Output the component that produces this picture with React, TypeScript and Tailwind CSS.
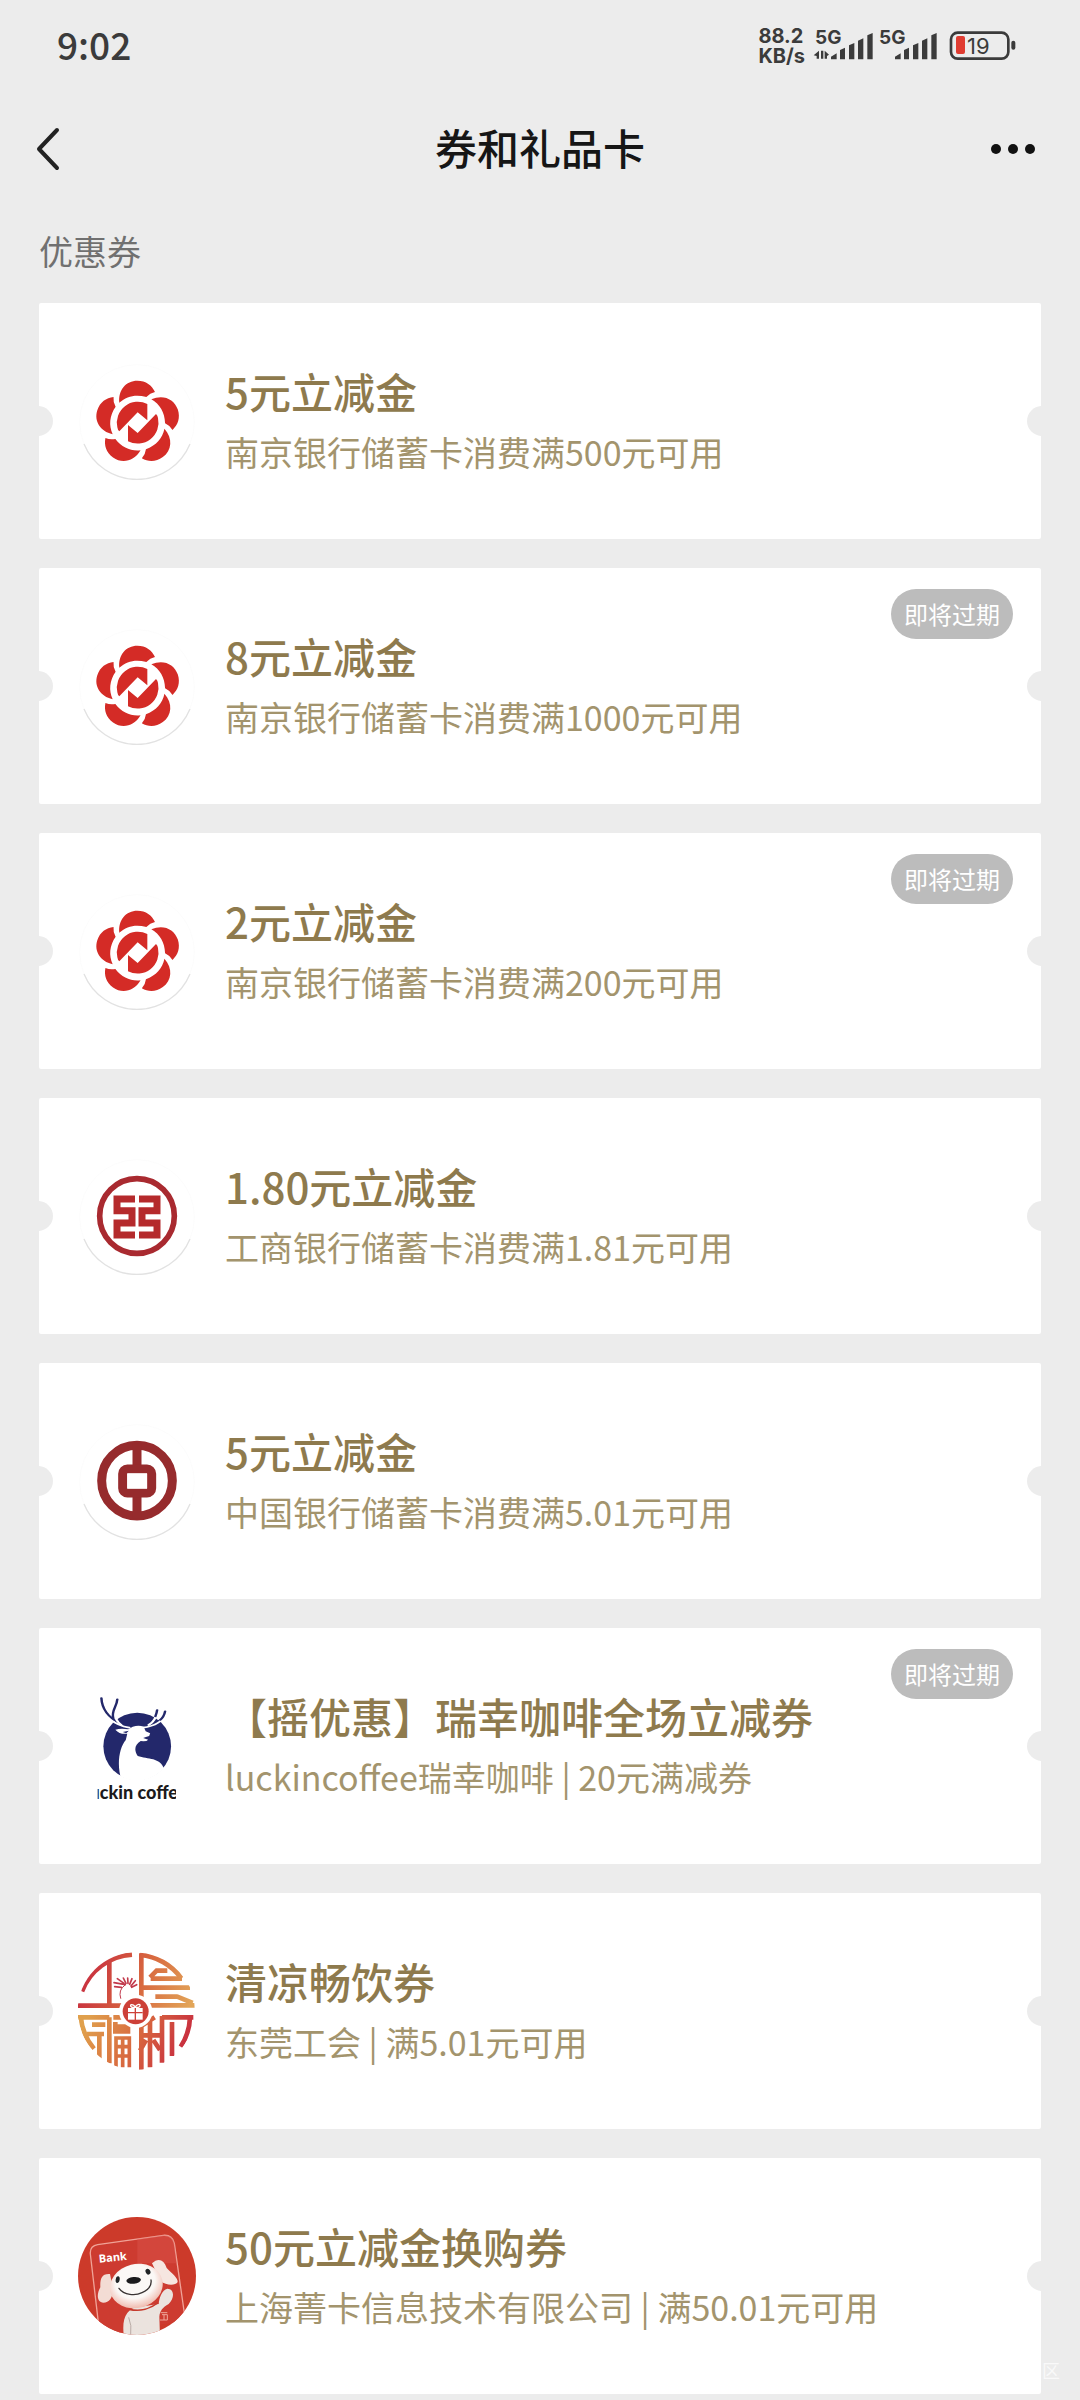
// src/App.tsx
import React from 'react';

interface Coupon {
  title: string;
  description: string;
  logo: React.ReactNode;
  expiring?: boolean;
}

const NanjingBankLogo = () => (
  <svg viewBox="144 216 354 354" className="size-full">
    <circle cx="321" cy="396" r="172" fill="#fff" stroke="#fafafa" strokeWidth="2" />
    <path d="M162 462A172 172 0 0 0 480 462" fill="none" stroke="#e2e2e2" strokeWidth="4" />
    <g fill="#d42b26">
      {[0, 72, 144, 216, 288].map((angle) => (
        <path
          key={angle}
          transform={`rotate(${angle} 323 399)`}
          d="M268 338C264 300 288 272 322 272C348 272 366 286 375 306Q360 309 349 321C318 312 290 318 268 338Z"
        />
      ))}
      <path d="M262 412A63 63 0 0 1 352 342V391L323 367L268 424Q263 420 262 412Z" />
      <path d="M262 412A63 63 0 0 1 352 342V391L323 367L268 424Q263 420 262 412Z" transform="rotate(180 323 398)" />
    </g>
  </svg>
);

const IcbcLogo = () => (
  <svg viewBox="54 21 354 354" className="size-full" fill="none">
    <circle cx="231" cy="201" r="172" fill="#fff" stroke="#fafafa" strokeWidth="2" />
    <path d="M72 267A172 172 0 0 0 390 267" stroke="#e2e2e2" strokeWidth="4" />
    <circle cx="231" cy="198" r="112" stroke="#a92a30" strokeWidth="17" />
    <g stroke="#b52a2c" strokeWidth="21">
      <path d="M225 147H171V182H216V219H171V255H225" />
      <path d="M237 147H291V182H246V219H291V255H237" />
    </g>
  </svg>
);

const BankOfChinaLogo = () => (
  <svg viewBox="54 36 354 354" className="size-full" fill="none">
    <circle cx="231" cy="216" r="172" fill="#fff" stroke="#fafafa" strokeWidth="2" />
    <path d="M72 282A172 172 0 0 0 390 282" stroke="#e2e2e2" strokeWidth="4" />
    <g stroke="#962b2d" strokeWidth="27">
      <circle cx="231" cy="212" r="106" />
      <path d="M231 100V170M231 255V325" />
      <rect x="188" y="177" width="87" height="72" rx="14" />
    </g>
    <rect x="202" y="190" width="59" height="46" fill="#fff" />
  </svg>
);

const LuckinLogo = () => (
  <svg viewBox="0 0 354 354" className="size-full">
    <defs>
      <clipPath id="luckin-disc">
        <ellipse cx="155" cy="229" rx="70" ry="103" />
      </clipPath>
      <clipPath id="luckin-word">
        <rect x="59" y="280" width="235" height="57" />
      </clipPath>
    </defs>
    <g transform="scale(1.493 1) translate(-36 -51)">
      <g fill="none" stroke="#23286b" strokeWidth="5" strokeLinecap="round">
        <path d="M83 84C84 116 94 140 120 160" />
        <path d="M115 88C114 112 102 122 107 146" />
        <path d="M211 124C208 148 196 160 174 168" />
        <path d="M195 120C193 142 187 152 183 160" />
      </g>
      <ellipse cx="155" cy="229" rx="68" ry="101" fill="#23286b" />
      <g clipPath="url(#luckin-disc)">
        <g fill="none" stroke="#fff" strokeWidth="5" strokeLinecap="round">
          <path d="M88 115C94 142 106 164 139 173" />
          <path d="M111 106C104 130 109 148 123 165" />
          <path d="M214 128C206 156 190 168 166 173" />
          <path d="M195 120C194 142 189 156 178 165" />
        </g>
        <path
          d="M111 179Q122 174 137 178L146 170Q158 165 168 170L172 184L181 190L179 198Q172 201 167 204L177 209Q174 215 162 213C150 224 148 240 156 258C176 268 202 262 209 297L236 345H128C112 300 117 236 132 210L135 191Q120 194 111 179Z"
          fill="#fff"
        />
        <path d="M126 186L138 182L133 190Z" fill="#23286b" />
      </g>
    </g>
    <g clipPath="url(#luckin-word)">
      <text
        x="175"
        y="335"
        textAnchor="middle"
        className="font-[Lato,sans-serif] text-[54px] font-black"
        fill="#1c1a1c"
      >
        luckin coffee
      </text>
    </g>
  </svg>
);

const UnionLogo = () => (
  <svg viewBox="54 66 354 354" className="size-full" fill="none">
    <defs>
      <linearGradient id="union-top" gradientUnits="userSpaceOnUse" x1="90" y1="110" x2="390" y2="230">
        <stop offset="0" stopColor="#c9323f" />
        <stop offset="0.5" stopColor="#d8683f" />
        <stop offset="1" stopColor="#e2a558" />
      </linearGradient>
      <linearGradient id="union-bottom" gradientUnits="userSpaceOnUse" x1="80" y1="270" x2="340" y2="400">
        <stop offset="0" stopColor="#e0a04c" />
        <stop offset="0.55" stopColor="#d8683f" />
        <stop offset="1" stopColor="#c9323f" />
      </linearGradient>
      <clipPath id="union-disc">
        <circle cx="229" cy="243" r="176" />
      </clipPath>
    </defs>
    <g clipPath="url(#union-disc)">
      <g stroke="url(#union-top)" strokeWidth="14">
        <path d="M66 184A170 170 0 0 1 216 74" />
        <path d="M148 96V222M54 227H195" />
        <path d="M244 70V202M240 75A170 170 0 0 1 364 145" />
        <path d="M366 146H272M270 142L290 122H322M244 173H390" />
        <path d="M268 226H404M286 200H352M350 199L398 219" />
      </g>
      <g stroke="url(#union-bottom)" strokeWidth="14">
        <path d="M54 262H148M62 258A170 170 0 0 0 102 356" />
        <path d="M80 312H132M118 312V386M96 284H136" />
        <path d="M148 262V400M160 262H200M162 290H206M166 276V304H204V286" />
        <path d="M168 412V324H208V412M168 350H208M168 378H208M188 324V412" strokeWidth="11" />
        <path d="M244 284V420M244 316H302M270 262V412M284 262L240 290M258 330L240 362M280 330L300 360" />
        <path d="M306 258V398M336 276V378M306 262H400M390 262A170 170 0 0 1 362 350" />
      </g>
    </g>
    <g stroke="#c23a4c" strokeLinecap="round">
      <path d="M182 205Q174 180 194 166" strokeWidth="3" />
      <path d="M196 164L162 158M192 160L172 146M198 160L190 144M204 160L203 144M209 163L216 146M213 168L226 152M215 172L230 164M184 172L164 170" strokeWidth="5" />
    </g>
    <circle cx="227" cy="244" r="50" fill="#fff" />
    <circle cx="227" cy="244" r="39" fill="#cd4038" />
    <g stroke="#fff" strokeWidth="4">
      <path d="M226 232C206 236 208 214 226 230C242 212 248 236 226 232Z" />
      <rect x="204" y="234" width="44" height="35" fill="#fff" stroke="none" />
      <path d="M226 234V270M204 248H248" stroke="#cd4038" />
    </g>
  </svg>
);

const JoyLogo = () => (
  <svg viewBox="54 51 354 354" className="size-full">
    <defs>
      <clipPath id="joy-disc">
        <circle cx="231" cy="228" r="177" />
      </clipPath>
      <radialGradient id="joy-head" cx="0.5" cy="0.4" r="0.62">
        <stop offset="0.6" stopColor="#fbf8f6" />
        <stop offset="1" stopColor="#efb5a8" />
      </radialGradient>
    </defs>
    <g clipPath="url(#joy-disc)">
      <rect x="54" y="51" width="354" height="354" fill="#cc3a2a" />
      <path d="M120 410L91 162Q89 138 113 134L310 106Q337 104 343 130L376 360" fill="#cd3b30" stroke="#f0a297" strokeWidth="4" />
      <path d="M232 117L310 106Q337 104 343 130L350 190H232Z" fill="#dc5750" opacity="0.4" />
      <text
        x="118"
        y="188"
        transform="rotate(-6 118 188)"
        className="font-['Noto_Sans',sans-serif] text-[33px] font-bold"
        fill="#fff"
      >
        Bank
      </text>
      <path d="M150 222C124 220 120 238 121 262C108 286 112 306 130 308C150 308 162 286 158 262Z" fill="#f3dcd4" />
      <path d="M276 190C294 172 312 178 320 204C338 222 354 234 353 246C346 258 318 256 302 244Z" fill="#f6e6e0" />
      <path d="M192 410C184 358 198 322 240 320L296 312C298 292 306 270 322 266C344 266 344 296 326 312C308 322 300 332 298 350L300 410Z" fill="#ebe3de" />
      <path d="M206 352Q216 376 212 404" fill="none" stroke="#b9aaa5" strokeWidth="3" />
      <ellipse cx="229" cy="258" rx="80" ry="66" transform="rotate(-14 229 258)" fill="url(#joy-head)" />
      <path d="M208 328C240 336 272 326 294 308" fill="none" stroke="#c53a2c" strokeWidth="5" />
      <ellipse cx="173" cy="239" rx="6" ry="10" transform="rotate(8 173 239)" fill="#202426" />
      <ellipse cx="264" cy="215" rx="7" ry="9" transform="rotate(-28 264 215)" fill="#202426" />
      <ellipse cx="221" cy="241" rx="22" ry="10" transform="rotate(-6 221 241)" fill="#1b1b1d" />
      <path d="M177 265C192 286 226 288 246 278C264 270 276 258 273 240" fill="none" stroke="#3a3434" strokeWidth="4" strokeLinecap="round" />
      <path d="M302 338H322M300 360H322V344H306M312 344V360" fill="none" stroke="#efa79c" strokeWidth="3" />
    </g>
  </svg>
);

const coupons: Coupon[] = [
  { title: '5元立减金', description: '南京银行储蓄卡消费满500元可用', logo: <NanjingBankLogo /> },
  { title: '8元立减金', description: '南京银行储蓄卡消费满1000元可用', logo: <NanjingBankLogo />, expiring: true },
  { title: '2元立减金', description: '南京银行储蓄卡消费满200元可用', logo: <NanjingBankLogo />, expiring: true },
  { title: '1.80元立减金', description: '工商银行储蓄卡消费满1.81元可用', logo: <IcbcLogo /> },
  { title: '5元立减金', description: '中国银行储蓄卡消费满5.01元可用', logo: <BankOfChinaLogo /> },
  { title: '【摇优惠】瑞幸咖啡全场立减券', description: 'luckincoffee瑞幸咖啡 | 20元满减券', logo: <LuckinLogo />, expiring: true },
  { title: '清凉畅饮券', description: '东莞工会 | 满5.01元可用', logo: <UnionLogo /> },
  { title: '50元立减金换购券', description: '上海菁卡信息技术有限公司 | 满50.01元可用', logo: <JoyLogo /> },
];

const Signal = ({ active = false }: { active?: boolean }) => (
  <svg viewBox="0 -18 192 144" className="h-12 w-16" fill="#3b3b3b">
    <text x="6" y="48" className="font-['Inter',sans-serif] text-[57px] font-bold">5G</text>
    {active && <path d="M2 82L18 68V92H11V84ZM24 68H31V92H24ZM35 68L48 80L42 84V92H35Z" />}
    <path d="M54 94V86L71 76V94ZM81 94V66L96 59V94ZM108 94V52L124 45V94ZM135 94V38L151 31V94ZM163 94V22L179 15V94Z" />
  </svg>
);

const Battery = () => (
  <svg viewBox="0 0 201 108" className="h-9 w-[67px]">
    <rect x="6" y="14" width="172" height="78" rx="20" fill="none" stroke="#3b3b3b" strokeWidth="8" />
    <rect x="187" y="38" width="12" height="27" rx="6" fill="#3b3b3b" />
    <rect x="21" y="24" width="27" height="54" rx="6" fill="#e03c31" />
    <text x="54" y="78" className="font-['Inter',sans-serif] text-[66px]" fill="#3b3b3b">19</text>
  </svg>
);

const StatusBar = () => (
  <div className="flex h-[92px] items-center justify-between pl-[57px] pr-16 text-[#3b3b3b]">
    <span className="pb-1 text-[37px] leading-none font-medium">9:02</span>
    <div className="flex items-center">
      <div className="mr-2 font-['Inter',sans-serif] text-[20px] leading-5 font-bold">
        <p>88.2</p>
        <p>KB/s</p>
      </div>
      <Signal active />
      <Signal />
      <div className="ml-2">
        <Battery />
      </div>
    </div>
  </div>
);

const NavBar = () => (
  <header className="grid h-[114px] grid-cols-[1fr_auto_1fr] items-center px-9">
    <button type="button" aria-label="返回" className="justify-self-start">
      <svg viewBox="0 0 24 44" className="h-11 w-6" fill="none" stroke="#222" strokeWidth="4" strokeLinecap="round" strokeLinejoin="round">
        <path d="M21 3L3 22L21 41" />
      </svg>
    </button>
    <h1 className="pb-1 text-[42px] leading-[60px] font-medium text-[#161616]">券和礼品卡</h1>
    <button type="button" aria-label="更多" className="justify-self-end pr-2">
      <svg viewBox="0 0 46 12" className="h-3 w-[46px]" fill="#111">
        <circle cx="6" cy="6" r="5" />
        <circle cx="23" cy="6" r="5" />
        <circle cx="40" cy="6" r="5" />
      </svg>
    </button>
  </header>
);

const CouponCard = ({ coupon }: { coupon: Coupon }) => (
  <li>
    <a href="#" className="relative flex h-[236px] items-center overflow-hidden rounded-xs bg-white pl-[39px]">
      <span className="absolute top-1/2 -left-4 size-[30px] -translate-y-1/2 rounded-full bg-[#ececec]" />
      <span className="absolute top-1/2 -right-4 size-[30px] -translate-y-1/2 rounded-full bg-[#ececec]" />
      <div className="size-[118px] shrink-0">{coupon.logo}</div>
      <div className="ml-[29px] whitespace-nowrap">
        <h2 className="text-[42px] leading-[62px] font-medium text-[#8e7a4d]">{coupon.title}</h2>
        <p className="text-[34px] leading-[60px] text-[#a3946d]">{coupon.description}</p>
      </div>
      {coupon.expiring && (
        <span className="absolute top-[21px] right-7 rounded-full bg-[#bcbcbc] px-[13px] text-[24px] leading-[50px] text-white">
          即将过期
        </span>
      )}
    </a>
  </li>
);

const App = () => {
  return (
    <div className="relative min-h-screen bg-[#ececec] pb-1.5 font-['Noto_Sans_CJK_SC',sans-serif]">
      <StatusBar />
      <NavBar />
      <main className="px-[39px] pt-5">
        <h2 className="mb-7 text-[34px] leading-[49px] text-[#707070]">优惠券</h2>
        <ul className="flex flex-col gap-[29px]">
          {coupons.map((coupon, index) => (
            <CouponCard key={index} coupon={coupon} />
          ))}
        </ul>
      </main>
      <span className="absolute right-5 bottom-4 text-[18px] text-white/70">区</span>
    </div>
  );
};

export default App;
